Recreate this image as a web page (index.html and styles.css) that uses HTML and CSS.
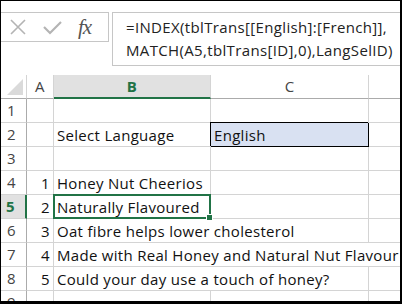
FILE: index.html
```html
<!DOCTYPE html>
<html lang="en">
<head>
    <meta charset="UTF-8">
    <title>Select Language</title>
    <link rel="stylesheet" href="styles.css">
</head>
<body>
    <div class="window">
        <div class="formula-bar">
            <div class="fx-buttons">
                <svg class="icon" width="20" height="20" viewBox="0 0 20 20">
                    <path d="M3 3 L17 17 M17 3 L3 17" stroke="#b4b4b4" stroke-width="1.6" fill="none"/>
                </svg>
                <svg class="icon" width="20" height="20" viewBox="0 0 20 20">
                    <path d="M2 10 L8 16 L19 5" stroke="#b4b4b4" stroke-width="2.2" fill="none"/>
                </svg>
                <span class="fx">fx</span>
            </div>
            <div class="formula">=INDEX(tblTrans[[English]:[French]],<br>MATCH(A5,tblTrans[ID],0),LangSelID)</div>
        </div>

        <div class="grid">
            <div class="corner"></div>
            <div class="col-head">A</div>
            <div class="col-head active">B</div>
            <div class="col-head">C</div>
            <div class="col-head last"></div>

            <div class="row-head">1</div>
            <div class="cell"></div><div class="cell"></div><div class="cell"></div><div class="cell last"></div>

            <div class="row-head">2</div>
            <div class="cell"></div>
            <div class="cell">Select Language</div>
            <div class="cell input">English</div>
            <div class="cell last"></div>

            <div class="row-head">3</div>
            <div class="cell"></div><div class="cell"></div><div class="cell"></div><div class="cell last"></div>

            <div class="row-head">4</div>
            <div class="cell num">1</div>
            <div class="cell">Honey Nut Cheerios</div>
            <div class="cell"></div><div class="cell last"></div>

            <div class="row-head active">5</div>
            <div class="cell num">2</div>
            <div class="cell selected">Naturally Flavoured</div>
            <div class="cell"></div><div class="cell last"></div>

            <div class="row-head">6</div>
            <div class="cell num">3</div>
            <div class="cell span2">Oat fibre helps lower cholesterol</div>
            <div class="cell last"></div>

            <div class="row-head">7</div>
            <div class="cell num">4</div>
            <div class="cell span3 last">Made with Real Honey and Natural Nut Flavour</div>

            <div class="row-head">8</div>
            <div class="cell num">5</div>
            <div class="cell span2">Could your day use a touch of honey?</div>
            <div class="cell last"></div>

            <div class="row-head">9</div>
            <div class="cell"></div><div class="cell"></div><div class="cell"></div><div class="cell last"></div>
        </div>
    </div>
</body>
</html>
```

FILE: styles.css
```css
body {
    margin: 0;
    font-family: "Open Sans", Lato, sans-serif;
    background-color: white;
}
.window {
    width: 402px;
    height: 304px;
    box-sizing: border-box;
    border-top: 1px solid #000;
    border-left: 1px solid #000;
    border-right: 2px solid #000;
    border-bottom: 3px solid #000;
    overflow: hidden;
    background-color: white;
}
.formula-bar {
    height: 74px;
    box-sizing: border-box;
    padding-top: 11px;
    display: flex;
    align-items: flex-start;
}
.fx-buttons {
    width: 108px;
    height: 30px;
    box-sizing: border-box;
    border: 1px solid #c6c6c6;
    border-left: none;
    display: flex;
    align-items: center;
    padding-left: 7px;
}
.icon {
    margin-right: 14px;
}
.icon + .icon {
    margin-right: 16px;
}
.fx {
    font-family: "Liberation Serif", serif;
    font-style: italic;
    font-size: 21px;
    color: #555;
    letter-spacing: -1px;
}
.formula {
    flex: 1;
    margin-left: 3px;
    height: 54px;
    box-sizing: border-box;
    border: 1px solid #c6c6c6;
    border-right: none;
    padding: 3px 0 0 13px;
    font-size: 15px;
    letter-spacing: 0.35px;
    line-height: 23px;
    color: #222;
    white-space: nowrap;
}
.grid {
    display: grid;
    grid-template-columns: 26px 27px 157px 158px 1fr;
    grid-auto-rows: 24px;
    font-size: 15px;
    letter-spacing: 0.3px;
}
.grid > div {
    box-sizing: border-box;
    white-space: nowrap;
    overflow: hidden;
}
.corner {
    border-right: 1px solid #d4d4d4;
    border-bottom: 1px solid #ababab;
    position: relative;
}
.corner::after {
    content: "";
    position: absolute;
    left: 6px;
    top: 4px;
    width: 0;
    height: 0;
    border-left: 16px solid transparent;
    border-bottom: 16px solid #dadada;
}
.col-head {
    border-right: 1px solid #d4d4d4;
    border-bottom: 1px solid #ababab;
    text-align: center;
    color: #444;
    line-height: 23px;
}
.col-head.active {
    background-color: #e1e1e1;
    color: #217346;
    font-weight: bold;
    border-bottom: 2px solid #217346;
}
.col-head.last,
.cell.last {
    border-right: none;
}
.row-head {
    border-right: 1px solid #ababab;
    border-bottom: 1px solid #d4d4d4;
    color: #444;
    padding-left: 6px;
    line-height: 23px;
}
.row-head.active {
    background-color: #e1e1e1;
    color: #217346;
    font-weight: bold;
    border-right: 2px solid #217346;
    padding-left: 5px;
}
.cell {
    border-right: 1px solid #d4d4d4;
    border-bottom: 1px solid #d4d4d4;
    padding: 0 3px;
    line-height: 24px;
    color: #111;
}
.cell.num {
    text-align: right;
}
.cell.span2 {
    grid-column: span 2;
}
.cell.span3 {
    grid-column: span 3;
}
.cell.input {
    background-color: #d9e1f2;
    border-right-color: #000;
    border-bottom-color: #000;
    box-shadow: -1px -1px 0 0 #000;
}
.cell.selected {
    position: relative;
    overflow: visible;
}
.cell.selected::before {
    content: "";
    position: absolute;
    left: -1px;
    top: -1px;
    right: -1px;
    bottom: -1px;
    border: 2px solid #217346;
}
.cell.selected::after {
    content: "";
    position: absolute;
    right: -3px;
    bottom: -3px;
    width: 5px;
    height: 5px;
    background-color: #217346;
    border: 1px solid white;
}
```
